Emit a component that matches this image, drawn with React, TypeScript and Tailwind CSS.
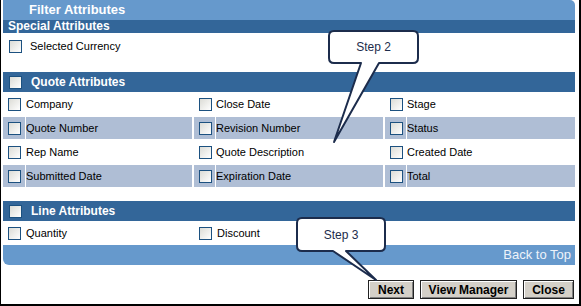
import React from "react";

const F = { fontFamily: '"Liberation Sans", Arial, sans-serif' };

function Cb() {
  return (
    <span className="inline-block w-[13px] h-[13px] shrink-0 border border-[#1c5180] bg-gradient-to-br from-[#dcdcd6] to-[#ffffff]" />
  );
}

function Row({ items, band }: { items: string[]; band: boolean }) {
  const bg = band ? "bg-[#afbed5]" : "bg-white";
  const cbW = ["w-[22px]", "w-[21px]", "w-[21px]"];
  const lW = ["w-[166px]", "w-[167px]", "w-[168px]"];
  const cbMl = ["", "ml-[2px]", "ml-[2px]"];
  return (
    <div className="flex h-[22px]">
      {items.map((t, i) => (
        <React.Fragment key={t}>
          <div className={`${cbW[i]} ${cbMl[i]} ${bg} flex items-center pl-[5px]`}>
            <Cb />
          </div>
          <div className={`${lW[i]} ml-[1px] ${bg} flex items-center text-[11px] text-black`}>{t}</div>
        </React.Fragment>
      ))}
    </div>
  );
}

function Header({ title }: { title: string }) {
  return (
    <div className="h-[20px] bg-[#336699] flex items-center pl-[6px]">
      <Cb />
      <span className="ml-[9px] text-white font-bold text-[12px]">{title}</span>
    </div>
  );
}

function Btn({ label, w }: { label: string; w: string }) {
  return (
    <div
      className={`${w} h-[19px] flex items-center justify-center bg-[#d4d0c8] border border-[#222] shadow-[inset_1px_1px_0_#ffffff,inset_-1px_-1px_0_#808080] text-[12px] font-bold text-black`}
    >
      {label}
    </div>
  );
}

export default function App() {
  return (
    <div style={F} className="relative w-[581px] h-[306px] bg-white border-l border-r-2 border-b-2 border-black pl-[2px] pr-[4px] overflow-hidden">
      <div className="w-[572px]">
        <div className="h-[20px] bg-[#6699cc] rounded-tr-[5px] flex items-center pl-[26px] text-white font-bold text-[13px]">
          Filter Attributes
        </div>
        <div className="h-[13px] bg-[#336699] flex items-center pl-[5px] text-white font-bold text-[12px] leading-[13px]">
          Special Attributes
        </div>
        <div className="h-[39px]">
          <div className="h-[26px] flex items-center pl-[6px]">
            <Cb />
            <span className="ml-[8px] text-[11px] text-black">Selected Currency</span>
          </div>
        </div>
        <Header title="Quote Attributes" />
        <div className="pt-[1px] flex flex-col gap-[2px]">
          <Row band={false} items={["Company", "Close Date", "Stage"]} />
          <Row band={true} items={["Quote Number", "Revision Number", "Status"]} />
          <Row band={false} items={["Rep Name", "Quote Description", "Created Date"]} />
          <Row band={true} items={["Submitted Date", "Expiration Date", "Total"]} />
        </div>
        <div className="h-[14px]" />
        <Header title="Line Attributes" />
        <div className="h-[24px] flex items-center">
          <div className="w-[22px] flex items-center pl-[5px]">
            <Cb />
          </div>
          <div className="w-[167px] pl-[1px] text-[11px] text-black">Quantity</div>
          <div className="w-[21px] ml-[2px] flex items-center pl-[5px]">
            <Cb />
          </div>
          <div className="ml-[1px] pl-[1px] text-[11px] text-black">Discount</div>
        </div>
        <div className="h-[20px] bg-[#6699cc] rounded-bl-[6px] flex items-center justify-end pr-[4px] text-[13px] text-[#eef3fa]">
          Back to Top
        </div>
        <div className="mt-[15px] flex justify-end gap-[6px] pr-[1px]">
          <Btn label="Next" w="w-[46px]" />
          <Btn label="View Manager" w="w-[97px]" />
          <Btn label="Close" w="w-[51px]" />
        </div>
      </div>

      <svg className="absolute left-0 top-0 pointer-events-none" width="581" height="306" viewBox="0 0 581 306">
        <path
          d="M333 31 H412 Q417 31 417 36 V58 Q417 63 412 63 H378 L333 142 L360 63 H333 Q328 63 328 58 V36 Q328 31 333 31 Z"
          fill="#ffffff"
          stroke="#1c2c4c"
          strokeWidth="2"
          strokeLinejoin="round"
        />
        <path
          d="M301 218 H379 Q384 218 384 223 V246 Q384 251 379 251 H345 L375 280 L332 251 H301 Q296 251 296 246 V223 Q296 218 301 218 Z"
          fill="#ffffff"
          stroke="#1c2c4c"
          strokeWidth="2"
          strokeLinejoin="round"
        />
      </svg>
      <div className="absolute left-[328px] top-[31px] w-[89px] h-[32px] flex items-center justify-center text-[12px] text-[#1c2c4c]">
        Step 2
      </div>
      <div className="absolute left-[296px] top-[218px] w-[88px] h-[33px] flex items-center justify-center text-[12px] text-[#1c2c4c]">
        Step 3
      </div>
    </div>
  );
}
